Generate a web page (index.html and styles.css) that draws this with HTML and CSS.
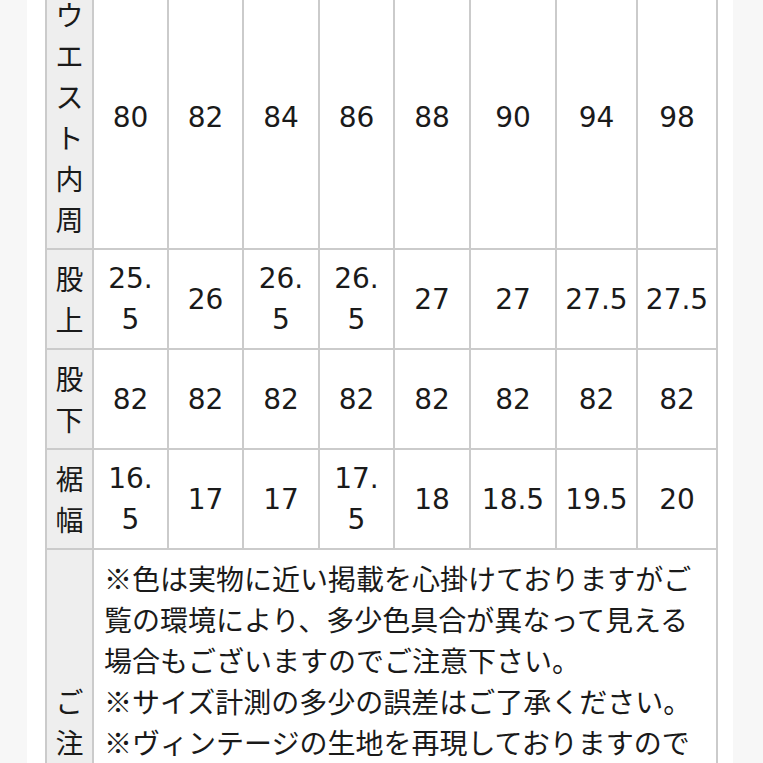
FILE: index.html
```html
<!DOCTYPE html>
<html lang="ja">
<head>
<meta charset="utf-8">
<title>サイズ表</title>
<link rel="stylesheet" href="styles.css">
</head>
<body>
<div class="page">
  <table class="size-table">
    <colgroup>
      <col class="c-head">
      <col class="c75"><col class="c75"><col class="c76"><col class="c75"><col class="c76">
      <col class="c86"><col class="c81"><col class="c80">
    </colgroup>
    <tbody>
      <tr class="row-tall">
        <th>ウエスト内周</th>
        <td>80</td><td>82</td><td>84</td><td>86</td><td>88</td><td>90</td><td>94</td><td>98</td>
      </tr>
      <tr>
        <th>股上</th>
        <td>25.<br>5</td><td>26</td><td>26.<br>5</td><td>26.<br>5</td><td>27</td><td>27</td><td>27.5</td><td>27.5</td>
      </tr>
      <tr>
        <th>股下</th>
        <td>82</td><td>82</td><td>82</td><td>82</td><td>82</td><td>82</td><td>82</td><td>82</td>
      </tr>
      <tr>
        <th>裾幅</th>
        <td>16.<br>5</td><td>17</td><td>17</td><td>17.<br>5</td><td>18</td><td>18.5</td><td>19.5</td><td>20</td>
      </tr>
      <tr>
        <th class="note-head">ご注意</th>
        <td class="notes" colspan="8">
          <p>※色は実物に近い掲載を心掛けておりますがご覧の環境により、多少色具合が異なって見える場合もございますのでご注意下さい。</p>
          <p>※サイズ計測の多少の誤差はご了承ください。</p>
          <p>※ヴィンテージの生地を再現しておりますので多少の色ムラや織りムラがございますが、仕様となりますのでご了承ください。</p>
          <p>※洗濯の際は裏返して単独でお洗いください。</p>
          <p>※商品によって多少の個体差がございます。</p>
        </td>
      </tr>
    </tbody>
  </table>
</div>
</body>
</html>
```

FILE: styles.css
```css
html, body {
  margin: 0;
  padding: 0;
}

body {
  background: #f7f7f7;
  color: #1a1a1a;
  font-family: "Noto Sans CJK JP", sans-serif;
  font-size: 28px;
  overflow: hidden;
}

.page {
  background: #ffffff;
  margin: 0 30px 0 27px;
  padding: 0 15px 0 18px;
  min-height: 780px;
}

.size-table {
  border-collapse: collapse;
  table-layout: fixed;
  width: 673px;
  margin-top: -16px;
}

.c-head { width: 47px; }
.c75 { width: 75px; }
.c76 { width: 76px; }
.c80 { width: 80px; }
.c81 { width: 81px; }
.c86 { width: 86px; }

.size-table th,
.size-table td {
  border: 2px solid #cbcbcb;
  padding: 8px 0;
  line-height: 41px;
  vertical-align: middle;
}

.size-table th {
  background: #eeeeee;
  font-weight: normal;
  text-align: center;
  font-family: "Noto Sans CJK JP", sans-serif;
}

.size-table td {
  text-align: center;
  font-family: "DejaVu Sans", "Noto Sans CJK JP", sans-serif;
  background: #ffffff;
}

.size-table td.notes {
  text-align: left;
  font-family: "Noto Sans CJK JP", sans-serif;
  padding: 8px 10px;
}

.notes p {
  margin: 0;
}
```
